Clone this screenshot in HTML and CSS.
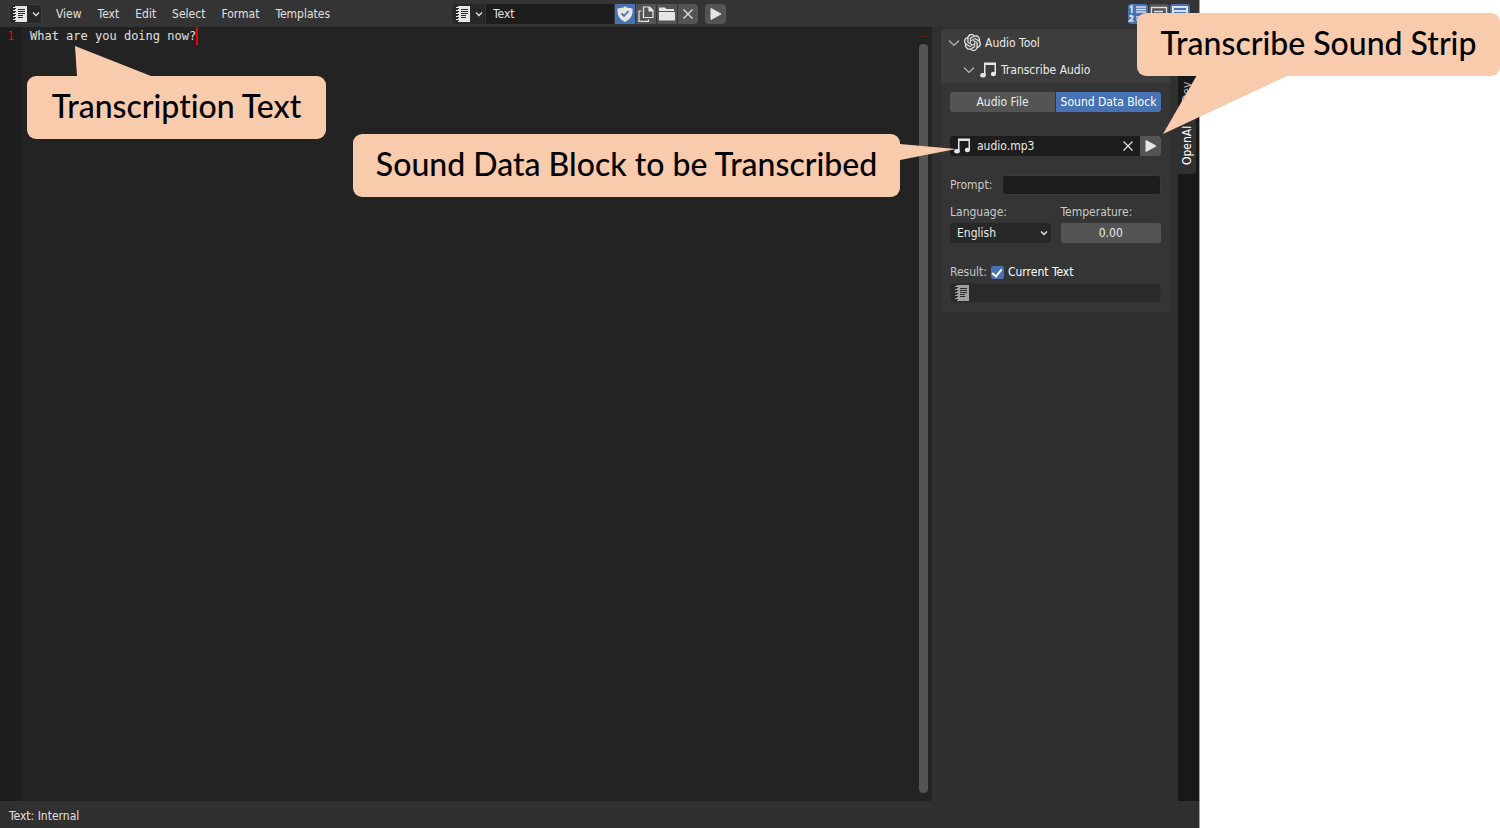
FILE: index.html
```html
<!DOCTYPE html>
<html lang="en">
<head>
<meta charset="utf-8">
<title>Text Editor</title>
<link rel="stylesheet" href="styles.css">
</head>
<body>
<svg class="symbols" aria-hidden="true">
  <symbol id="i-text" viewBox="0 0 16 16"><path fill="currentColor" fill-rule="evenodd" d="M3 0h12v16H3v-1h1v-1H3v-2h1v-1H3V9h1V8H3V6h1V5H3V3h1V2H3zM6 3v1h7V3zM6 5v1h7V5zM6 7v1h7V7zM6 9v1h5V9zM6 11v1h5v-1z"/><path stroke="currentColor" d="M1 1.500h3M1 4.500h3M1 7.500h3M1 10.500h3M1 13.500h3"/></symbol>
  <symbol id="i-down" viewBox="0 0 8 8"><path fill="none" stroke="currentColor" stroke-width="1.300" d="M1 2.500l3 3 3-3"/></symbol>
  <symbol id="i-open" viewBox="0 0 12 12"><path fill="none" stroke="currentColor" stroke-width="1.200" d="M1 3.500l5 5 5-5"/></symbol>
  <symbol id="i-play" viewBox="0 0 16 16"><path fill="currentColor" stroke="currentColor" stroke-linejoin="round" d="M3 2.500v11L13 8z"/></symbol>
  <symbol id="i-x" viewBox="0 0 16 16"><path stroke="currentColor" stroke-width="1.200" d="M3.500 3.500l9 9M12.500 3.500l-9 9"/></symbol>
  <symbol id="i-notes" viewBox="0 0 16 16"><path fill="currentColor" d="M4 .500h12V12h-1.500V3H5.500v10H4z"/><ellipse cx="3" cy="13.300" rx="2.800" ry="2.200" fill="currentColor"/><ellipse cx="13.400" cy="12" rx="2.600" ry="2.200" fill="currentColor"/></symbol>
  <symbol id="i-shield" viewBox="0 0 16 16"><path fill="currentColor" d="M8 0l1.500 1.500 6 1v4Q15 12.500 8 16 1 12.500.500 6.500v-4l6-1z"/><path fill="none" stroke="#4772b3" stroke-width="1.800" d="M4.500 7.500L7 10l4.500-5"/></symbol>
  <symbol id="i-copy" viewBox="0 0 16 16"><path fill="none" stroke="currentColor" stroke-width="1.200" d="M5.500 1h6L15 4.500v7H5.500zM3.500 5H1v10.300h9.500V13.500"/><path fill="currentColor" d="M10.500 1h1.300L15 4.200V5.500h-4.500z"/></symbol>
  <symbol id="i-folder" viewBox="0 0 16 16"><path fill="currentColor" d="M0 1.500h6l1.500 1.500H15v2H0zM0 6h16v8.500H0z"/></symbol>
  <symbol id="i-knot" viewBox="0 0 24 24"><path fill="currentColor" stroke="currentColor" stroke-width=".3" d="M22.2819 9.8211a5.9847 5.9847 0 0 0-.5157-4.9108 6.0462 6.0462 0 0 0-6.5098-2.9A6.0651 6.0651 0 0 0 4.9807 4.1818a5.9847 5.9847 0 0 0-3.9977 2.9 6.0462 6.0462 0 0 0 .7427 7.0966 5.98 5.98 0 0 0 .511 4.9107 6.051 6.051 0 0 0 6.5146 2.9001A5.9847 5.9847 0 0 0 13.2599 24a6.0557 6.0557 0 0 0 5.7718-4.2058 5.9894 5.9894 0 0 0 3.9977-2.9001 6.0557 6.0557 0 0 0-.7475-7.0729zm-9.022 12.6081a4.4755 4.4755 0 0 1-2.8764-1.0408l.1419-.0804 4.7783-2.7582a.7948.7948 0 0 0 .3927-.6813v-6.7369l2.02 1.1686a.071.071 0 0 1 .038.052v5.5826a4.504 4.504 0 0 1-4.4945 4.4944zm-9.6607-4.1254a4.4708 4.4708 0 0 1-.5346-3.0137l.142.0852 4.783 2.7582a.7712.7712 0 0 0 .7806 0l5.8428-3.3685v2.3324a.0804.0804 0 0 1-.0332.0615L9.74 19.9502a4.4992 4.4992 0 0 1-6.1408-1.6464zM2.3408 7.8956a4.485 4.485 0 0 1 2.3655-1.9728V11.6a.7664.7664 0 0 0 .3879.6765l5.8144 3.3543-2.0201 1.1685a.0757.0757 0 0 1-.071 0l-4.8303-2.7865A4.504 4.504 0 0 1 2.3408 7.872zm16.5963 3.8558L13.1038 8.364 15.1192 7.2a.0757.0757 0 0 1 .071 0l4.8303 2.7913a4.4944 4.4944 0 0 1-.6765 8.1042v-5.6772a.79.79 0 0 0-.407-.667zm2.0107-3.0231l-.142-.0852-4.7735-2.7818a.7759.7759 0 0 0-.7854 0L9.409 9.2297V6.8974a.0662.0662 0 0 1 .0284-.0615l4.8303-2.7866a4.4992 4.4992 0 0 1 6.6802 4.66zM8.3065 12.863l-2.02-1.1638a.0804.0804 0 0 1-.038-.0567V6.0742a4.4992 4.4992 0 0 1 7.3757-3.4537l-.142.0805L8.704 5.459a.7948.7948 0 0 0-.3927.6813zm1.0976-2.3654l2.602-1.4998 2.6069 1.4998v2.9994l-2.5974 1.4997-2.6067-1.4997Z"/></symbol>
  <symbol id="i-lines" viewBox="0 0 20 20"><path fill="none" stroke="currentColor" stroke-width="1.700" d="M2 3.500l1.800-1.300V9M1.500 12.500q2-1.500 3.200 0 .500 1.500-3 4.500h4M8 3h10M8 5.500h10M8 8h10M8 13h10M8 15.500h10"/></symbol>
  <symbol id="i-wrap" viewBox="0 0 20 20"><path fill="none" stroke="currentColor" stroke-width="1.300" d="M2.500 3.500h15v13h-15zM5 7.500h9M5 10.500h6M5 13.500h4"/></symbol>
  <symbol id="i-syntax" viewBox="0 0 20 20"><path fill="none" stroke="currentColor" stroke-width="2" d="M3 3h14v14H3zM3 7h14M3 11h14"/></symbol>
</svg>

<div class="app">
  <header class="topbar">
    <div class="menus">
      <button class="picker framed" aria-label="Editor type"><svg class="icon"><use href="#i-text"/></svg><svg class="caret"><use href="#i-down"/></svg></button>
      <nav class="menu">
        <button>View</button><button>Text</button><button>Edit</button><button>Select</button><button>Format</button><button>Templates</button>
      </nav>
    </div>
    <div class="datablock">
      <button class="picker" aria-label="Browse text"><svg class="icon"><use href="#i-text"/></svg><svg class="caret"><use href="#i-down"/></svg></button>
      <input class="name" type="text" value="Text" aria-label="Text name">
      <button class="tool on" aria-label="Fake user"><svg class="icon"><use href="#i-shield"/></svg></button>
      <button class="tool" aria-label="New"><svg class="icon"><use href="#i-copy"/></svg></button>
      <button class="tool" aria-label="Open"><svg class="icon"><use href="#i-folder"/></svg></button>
      <button class="tool" aria-label="Unlink"><svg class="icon"><use href="#i-x"/></svg></button>
    </div>
    <button class="tool run" aria-label="Run script"><svg class="icon"><use href="#i-play"/></svg></button>
    <div class="toggles">
      <button class="tool on" aria-label="Line numbers"><svg class="glyph"><use href="#i-lines"/></svg></button>
      <button class="tool" aria-label="Word wrap"><svg class="glyph"><use href="#i-wrap"/></svg></button>
      <button class="tool on" aria-label="Syntax highlight"><svg class="glyph"><use href="#i-syntax"/></svg></button>
    </div>
  </header>

  <main class="workspace">
    <div class="gutter">1</div>
    <div class="code"><span class="line">What are you doing now?</span></div>
    <div class="scroll"><div class="mark"></div><div class="thumb"></div></div>
    <aside class="sidebar">
      <section class="panel">
        <div class="heads">
          <button class="head"><svg class="arrow"><use href="#i-open"/></svg><svg class="logo"><use href="#i-knot"/></svg>Audio Tool</button>
          <button class="head sub"><svg class="arrow"><use href="#i-open"/></svg><svg class="icon"><use href="#i-notes"/></svg>Transcribe Audio</button>
        </div>
        <div class="fields">
          <div class="segments"><button>Audio File</button><button class="on">Sound Data Block</button></div>
          <div class="sound">
            <svg class="icon"><use href="#i-notes"/></svg>
            <input type="text" value="audio.mp3" aria-label="Sound data block">
            <button class="clear" aria-label="Unlink sound"><svg class="icon"><use href="#i-x"/></svg></button>
            <button class="tool" aria-label="Transcribe"><svg class="icon"><use href="#i-play"/></svg></button>
          </div>
          <div class="prompt"><label for="prompt">Prompt:</label><input id="prompt" type="text"></div>
          <div class="pair">
            <div class="stack"><label for="lang">Language:</label>
              <div class="select"><select id="lang"><option>English</option></select><svg class="caret"><use href="#i-down"/></svg></div></div>
            <div class="stack"><label for="temp">Temperature:</label><input id="temp" class="number" type="text" value="0.00"></div>
          </div>
          <div class="result">
            <div class="check"><span>Result:</span><input id="current" type="checkbox" checked><label for="current">Current Text</label></div>
            <div class="target"><svg class="icon"><use href="#i-text"/></svg><input type="text" aria-label="Result text" disabled></div>
          </div>
        </div>
      </section>
    </aside>
    <div class="tabs"><button class="tab">Dev</button><button class="tab active">OpenAI</button></div>
  </main>

  <footer class="status">Text: Internal</footer>

  <div class="callout c-text">Transcription Text<svg class="tail" viewBox="0 0 76 30"><path d="M0 0l2 30h74z"/></svg></div>
  <div class="callout c-block">Sound Data Block to be Transcribed<svg class="tail" viewBox="0 0 56 16"><path d="M0 0l56 5L0 16z"/></svg></div>
  <div class="callout c-strip">Transcribe Sound Strip<svg class="tail" viewBox="0 0 124 59"><path d="M34 0h90v1L0 59z"/></svg></div>
</div>
</body>
</html>
```
FILE: styles.css
```css
* { box-sizing: border-box; }
body { margin: 0; background: #fff; font: 12px/18px "DejaVu Sans Condensed", "DejaVu Sans", sans-serif; color: #e0e0e0; }
button, input, select { font: inherit; color: inherit; border: 0; padding: 0; margin: 0; background: none; min-width: 0; outline: 0; }
button { display: flex; align-items: center; justify-content: center; white-space: nowrap; }
.symbols { position: absolute; width: 0; height: 0; }
.icon { width: 16px; height: 16px; flex: none; color: #e6e6e6; }
.caret { width: 8px; height: 8px; flex: none; }
.arrow { width: 12px; height: 12px; flex: none; color: #b8b8b8; }
.logo { width: 17px; height: 17px; flex: none; }
.glyph { width: 20px; height: 20px; }

.app { position: relative; width: 80%; min-height: 100vh; display: flex; flex-direction: column; background: #303030; border-right: 1px solid #a0a0a0; }

.topbar { display: flex; align-items: center; height: 27px; padding: 1px 9px 0; background: #343434; }
.menus { display: flex; flex: 0 1 443px; gap: 14px; }
.picker { width: 33px; height: 20px; gap: 4px; background: #282828; border-radius: 4px 0 0 4px; }
.framed { border: 1px solid #3d3d3d; border-radius: 4px; }
.menu { display: flex; gap: 16px; }
.datablock { display: flex; gap: 1px; border-radius: 4px; overflow: hidden; }
.name { width: 128px; height: 20px; padding: 0 7px; background: #1d1d1d; }
.tool { width: 21px; height: 20px; background: #545454; }
.tool.on { background: #4772b3; }
.datablock .tool { width: 20px; }
.run { margin-left: 7px; border-radius: 4px; }
.toggles { display: flex; gap: 1px; margin-left: auto; }
.toggles .tool { width: 20px; border-radius: 3px; }

.workspace { display: flex; flex: 1; background: #232323; }
.gutter { width: 22px; padding-left: 7px; background: #1d1d1d; color: #f00000; font-family: "DejaVu Sans Mono", monospace; line-height: 18px; }
.code { flex: 1; padding-left: 8px; font-family: "DejaVu Sans Mono", monospace; line-height: 18px; }
.line { display: inline-block; border-right: 2px solid #f00000; }
.scroll { display: flex; flex-direction: column; width: 13px; padding: 9px 4px 8px 0; gap: 7px; }
.mark { height: 1px; background: #5a1c1c; }
.thumb { flex: 1; border-radius: 4px; background: #545454; }

.sidebar { width: 246px; padding: 2px 8px 0 9px; background: #303030; }
.panel { border-radius: 4px; overflow: hidden; background: #353535; }
.heads { background: #3d3d3d; }
.head { height: 27px; gap: 4px; padding-left: 7px; }
.head.sub { padding-left: 22px; gap: 5px; }
.fields { padding: 9px; }
.fields, .head { color: #ebebeb; }
.segments { display: grid; grid-template-columns: 1fr 1fr; gap: 1px; border-radius: 3px; overflow: hidden; }
.segments button { height: 20px; background: #545454; }
.segments .on { background: #4772b3; color: #fff; }
.sound { display: flex; align-items: center; height: 20px; margin-top: 24px; padding-left: 4px; border-radius: 3px; overflow: hidden; background: #1d1d1d; }
.sound input { flex: 1; padding-left: 7px; }
.clear { width: 24px; height: 20px; }
.prompt { display: flex; gap: 10px; margin-top: 19px; line-height: 20px; }
.prompt input { flex: 1; height: 20px; border-radius: 3px; background: #1d1d1d; border: 1px solid #3a3a3a; }
.pair { display: grid; grid-template-columns: 1fr 1fr; gap: 10px; margin-top: 8px; }
.stack { display: grid; gap: 2px; }
label, .check span { color: #c8c8c8; }
.select { display: flex; align-items: center; height: 20px; padding-right: 3px; border-radius: 3px; background: #282828; }
.select select { flex: 1; appearance: none; padding-left: 7px; }
.number { width: 100%; height: 20px; border-radius: 3px; background: #545454; text-align: center; }
.result { display: grid; gap: 2px; margin-top: 20px; }
.check { display: flex; align-items: center; gap: 4px; }
.check label { color: #fff; }
.check input { appearance: none; width: 13px; height: 13px; border-radius: 2px; background: #4772b3; display: grid; place-items: center; }
.check input::before { content: ""; width: 4px; height: 8px; border: solid #fff; border-width: 0 2px 2px 0; transform: rotate(40deg); }
.target { display: flex; align-items: center; height: 20px; padding-left: 3px; border-radius: 3px; background: #2a2a2a; border: 1px solid #303030; }
.target .icon { color: #a0a0a0; }
.target input { flex: 1; }

.tabs { display: flex; flex-direction: column; width: 21px; padding: 46px 3px 0 0; gap: 6px; background: #181818; }
.tab { writing-mode: vertical-rl; transform: rotate(180deg); width: 18px; height: 38px; color: #b8b8b8; }
.tab.active { height: 57px; border-radius: 4px 0 0 4px; background: #303030; color: #fff; }

.status { height: 27px; padding: 0 9px; line-height: 30px; background: #303030; }

.callout { position: absolute; display: flex; justify-content: center; height: 63px; border-radius: 9px; background: #f8cbad; color: #000; font: 500 32px/60px Lato, sans-serif; font-variant-ligatures: none; white-space: nowrap; }
.tail { position: absolute; fill: #f8cbad; }
.c-text { left: 27px; top: 76px; width: 299px; }
.c-text .tail { left: 48px; bottom: 100%; width: 76px; height: 30px; }
.c-block { right: 299px; top: 134px; width: 547px; }
.c-block .tail { left: 100%; top: 10px; width: 56px; height: 16px; }
.c-strip { left: calc(100% - 62px); top: 13px; width: 363px; }
.c-strip .tail { left: 26px; top: 62px; width: 124px; height: 59px; }
```
